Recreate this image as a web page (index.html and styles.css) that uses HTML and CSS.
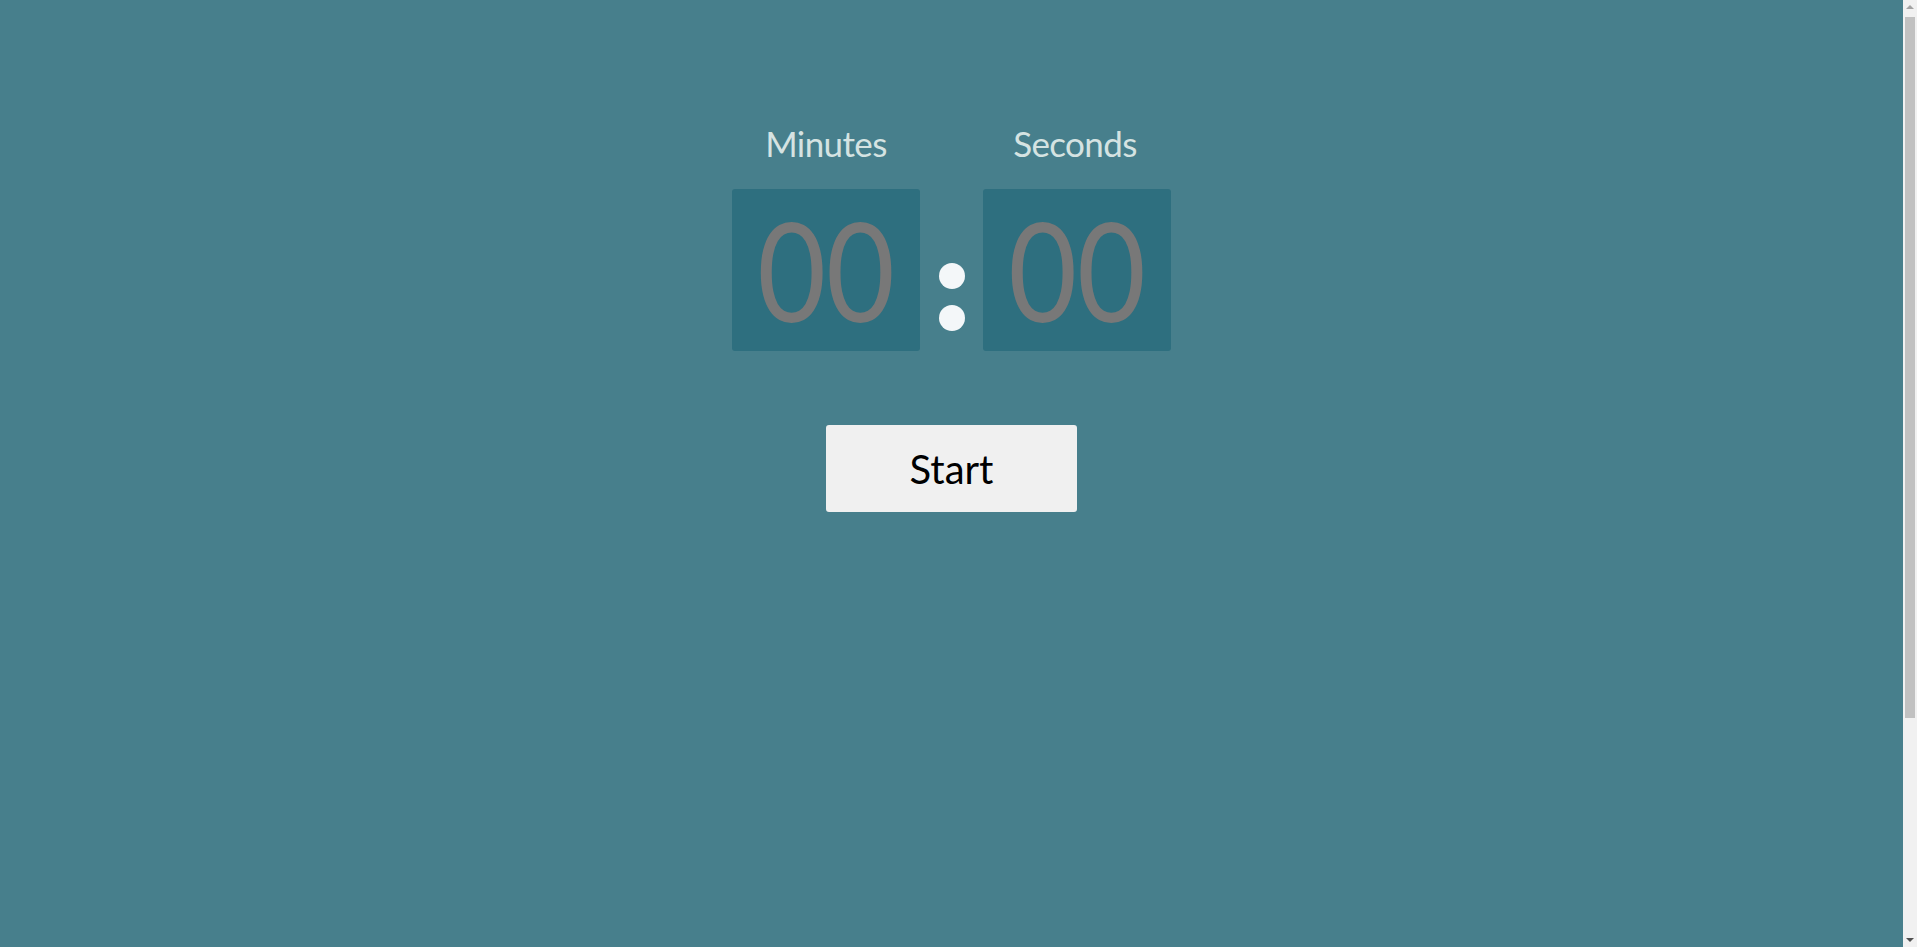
FILE: index.html
```html
<!DOCTYPE html>
<html lang="en">
<head>
<meta charset="utf-8">
<title>Timer</title>
<link rel="stylesheet" href="styles.css">
</head>
<body>
<main class="timer">
  <div class="clock">
    <div class="unit">
      <div class="label">Minutes</div>
      <div class="box"><span class="digits">00</span></div>
    </div>
    <div class="colon"><span class="dot"></span><span class="dot"></span></div>
    <div class="unit">
      <div class="label label-sec">Seconds</div>
      <div class="box"><span class="digits">00</span></div>
    </div>
  </div>
  <button class="start">Start</button>
</main>
<div class="scrollbar" aria-hidden="true">
  <span class="arrow up"></span>
  <span class="thumb"></span>
  <span class="arrow down"></span>
</div>
</body>
</html>
```
FILE: styles.css
```css
html, body {
  margin: 0;
  padding: 0;
}
body {
  background: #477f8c;
  height: 947px;
  overflow: hidden;
  font-family: "Gill Sans", "Gill Sans MT", Lato, "Noto Sans", sans-serif;
}
.timer {
  margin-right: 14px;
  display: flex;
  flex-direction: column;
  align-items: center;
  padding-top: 118px;
}
.clock {
  display: flex;
  align-items: flex-end;
}
.unit {
  display: flex;
  flex-direction: column;
  align-items: center;
  width: 188px;
}
.label {
  color: #d5e3e2;
  font-size: 35px;
  letter-spacing: -0.6px;
  line-height: 50px;
  margin-bottom: 21px;
}
.label-sec {
  margin-right: 4px;
}
.box {
  width: 188px;
  height: 162px;
  background: #2e6f7f;
  border-radius: 3px;
  color: #787878;
  font-size: 138px;
  line-height: 160px;
  text-align: center;
}
.digits {
  display: inline-block;
  transform: scaleX(0.86);
}
.colon {
  width: 63px;
  height: 162px;
  display: flex;
  flex-direction: column;
  align-items: center;
  gap: 16px;
  padding-top: 74px;
  box-sizing: border-box;
}
.dot {
  width: 26px;
  height: 26px;
  border-radius: 50%;
  background: #f4f7f9;
}
.start {
  margin-top: 74px;
  width: 251px;
  height: 87px;
  background: #f0f0f0;
  border: none;
  border-radius: 3px;
  font-family: "Gill Sans", "Gill Sans MT", Lato, "Noto Sans", sans-serif;
  font-size: 40px;
  color: #000;
  padding: 0;
  cursor: pointer;
}
.scrollbar {
  position: fixed;
  top: 0;
  right: 0;
  width: 14px;
  height: 947px;
  background: #f1f1f1;
  display: flex;
  flex-direction: column;
  align-items: center;
}
.thumb {
  display: block;
  width: 10px;
  height: 701px;
  background: #c1c1c1;
  margin-top: 1px;
  flex: none;
}
.arrow {
  display: block;
  width: 0;
  height: 0;
  border-left: 4px solid transparent;
  border-right: 4px solid transparent;
  flex: none;
}
.arrow.up {
  margin-top: 5px;
  margin-bottom: 7px;
  border-bottom: 4px solid #a3a3a3;
}
.arrow.down {
  margin-top: auto;
  margin-bottom: 5px;
  border-top: 4px solid #505050;
}
```
